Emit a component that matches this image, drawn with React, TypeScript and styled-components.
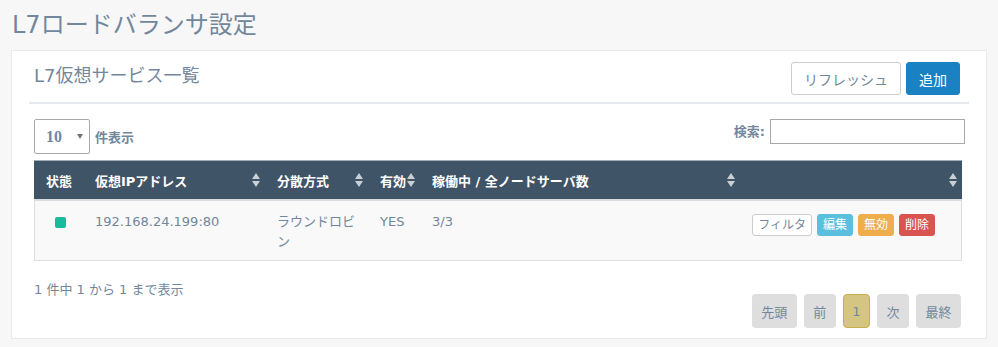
import React from "react";
import styled, { createGlobalStyle } from "styled-components";

const GlobalStyle = createGlobalStyle`
  html, body {
    margin: 0;
    padding: 0;
    background: #F7F7F7;
  }
  body {
    font-family: "DejaVu Sans", "Noto Sans CJK JP", sans-serif;
    font-size: 13px;
    color: #73879C;
  }
  * { box-sizing: border-box; }
`;

const Page = styled.div`
  width: 998px;
  height: 347px;
  padding: 0 11px;
  overflow: hidden;
`;

const PageTitle = styled.h3`
  margin: 0;
  height: 50px;
  line-height: 50px;
  font-size: 24px;
  font-weight: normal;
  padding-left: 1px;
  color: #73879C;
`;

const Panel = styled.div`
  background: #fff;
  border: 1px solid #E6E9ED;
  padding: 10px 17px;
  height: 289px;
`;

const PanelHeader = styled.div`
  display: flex;
  justify-content: space-between;
  align-items: flex-start;
  height: 43px;
  border-bottom: 2px solid #E6E9ED;
  padding: 0 9px 0 5px;
`;

const PanelTitle = styled.h2`
  margin: 0;
  font-size: 18px;
  line-height: 29px;
  font-weight: normal;
  color: #73879C;
`;

const ButtonGroup = styled.div`
  display: flex;
  gap: 5px;
  margin-top: 1px;
`;

const HeaderButton = styled.button<{ $primary?: boolean }>`
  height: 33px;
  padding: 0 12px;
  font-family: inherit;
  font-size: 14px;
  border-radius: 3px;
  border: 1px solid ${(p) => (p.$primary ? "#1A82C3" : "#cccccc")};
  background: ${(p) => (p.$primary ? "#1A82C3" : "#ffffff")};
  color: ${(p) => (p.$primary ? "#ffffff" : "#73879C")};
`;

const Content = styled.div`
  padding: 0 4px 0 5px;
`;

const Controls = styled.div`
  display: flex;
  justify-content: space-between;
  align-items: flex-start;
  margin-top: 15px;
  height: 35px;
`;

const LengthGroup = styled.div`
  display: flex;
  align-items: center;
  gap: 5px;
  font-weight: bold;
`;

const SelectBox = styled.div`
  width: 56px;
  height: 35px;
  border: 1px solid #aaaaaa;
  border-radius: 2px;
  display: flex;
  align-items: center;
  justify-content: space-between;
  padding: 0 6px 0 11px;
  font-family: "Liberation Serif", serif;
  font-size: 16px;
  font-weight: bold;
  color: #73879C;
`;

const Caret = styled.span`
  width: 0;
  height: 0;
  border-left: 3px solid transparent;
  border-right: 3px solid transparent;
  border-top: 5px solid #777;
`;

const SearchGroup = styled.label`
  display: flex;
  align-items: flex-start;
  gap: 5px;
  font-weight: bold;
  line-height: 25px;
`;

const SearchInput = styled.input`
  width: 195px;
  height: 25px;
  border: 1px solid #aaaaaa;
  padding: 0 4px;
  font-family: inherit;
  outline: none;
`;

const TableWrap = styled.div`
  margin-top: 6px;
  margin-right: 3px;
`;

const Table = styled.table`
  width: 928px;
  border-collapse: separate;
  border-spacing: 0;
  table-layout: fixed;
`;

const Th = styled.th`
  height: 41px;
  background: #3F5467;
  color: #ffffff;
  font-weight: bold;
  text-align: left;
  padding: 0 5px 0 12px;
  border-top: 1px solid #a3acb5;
  border-bottom: 2px solid #d9dde1;
`;

const ThInner = styled.div`
  display: flex;
  justify-content: space-between;
  align-items: center;
  white-space: nowrap;
`;

const Td = styled.td<{ $first?: boolean; $last?: boolean }>`
  background: #F9F9F9;
  vertical-align: top;
  padding: 11px 8px 0 12px;
  line-height: 20px;
  height: 60px;
  border-bottom: 1px solid #dddddd;
  border-left: ${(p) => (p.$first ? "1px solid #dddddd" : "none")};
  border-right: ${(p) => (p.$last ? "1px solid #dddddd" : "none")};
`;

const ActionTd = styled(Td)`
  padding: 13px 26px 0 0;
`;

const StatusDot = styled.span<{ $color: string }>`
  display: block;
  width: 11px;
  height: 11px;
  border-radius: 2px;
  background: ${(p) => p.$color};
  margin: 5px 0 0 8px;
`;

const Actions = styled.div`
  display: flex;
  justify-content: flex-end;
  gap: 5px;
`;

const SmallButton = styled.button<{ $bg: string; $border: string; $fg: string }>`
  height: 22px;
  padding: 0 5px;
  font-family: inherit;
  font-size: 12px;
  line-height: 20px;
  border-radius: 3px;
  background: ${(p) => p.$bg};
  border: 1px solid ${(p) => p.$border};
  color: ${(p) => p.$fg};
`;

const Footer = styled.div`
  display: flex;
  justify-content: space-between;
  align-items: flex-start;
  padding-top: 19px;
  margin-right: 4px;
`;

const Info = styled.div`
  line-height: 20px;
`;

const Pagination = styled.div`
  display: flex;
  gap: 7px;
  margin-top: 14px;
`;

const PageButton = styled.button<{ $active?: boolean }>`
  height: 34px;
  padding: 0 ${(p) => (p.$active ? "8.5px" : "9.5px")};
  font-family: inherit;
  font-size: 13px;
  border-radius: 4px;
  border: ${(p) => (p.$active ? "1px solid #C7AE4F" : "none")};
  background: ${(p) => (p.$active ? "#D5C582" : "#DEDEDE")};
  color: #73879C;
`;

const SortIcon = () => (
  <svg width="8" height="14" viewBox="0 0 8 14" style={{ flex: "none" }}>
    <path d="M4 0 L8 6 L0 6 Z" fill="#c9cfd5" />
    <path d="M0 8 L8 8 L4 14 Z" fill="#c9cfd5" />
  </svg>
);

const columns: { label: string; width: number; sort: boolean }[] = [
  { label: "状態", width: 49, sort: false },
  { label: "仮想IPアドレス", width: 182, sort: true },
  { label: "分散方式", width: 103, sort: true },
  { label: "有効", width: 52, sort: true },
  { label: "稼働中 / 全ノードサーバ数", width: 320, sort: true },
  { label: "", width: 222, sort: true },
];

export default function App() {
  return (
    <>
      <GlobalStyle />
      <Page>
        <PageTitle>L7ロードバランサ設定</PageTitle>
        <Panel>
          <PanelHeader>
            <PanelTitle>L7仮想サービス一覧</PanelTitle>
            <ButtonGroup>
              <HeaderButton>リフレッシュ</HeaderButton>
              <HeaderButton $primary>追加</HeaderButton>
            </ButtonGroup>
          </PanelHeader>
          <Content>
            <Controls>
              <LengthGroup>
                <SelectBox>
                  10
                  <Caret />
                </SelectBox>
                件表示
              </LengthGroup>
              <SearchGroup>
                検索:
                <SearchInput type="text" />
              </SearchGroup>
            </Controls>
            <TableWrap>
              <Table>
                <colgroup>
                  {columns.map((c, i) => (
                    <col key={i} style={{ width: c.width }} />
                  ))}
                </colgroup>
                <thead>
                  <tr>
                    {columns.map((c, i) => (
                      <Th key={i}>
                        <ThInner>
                          <span>{c.label}</span>
                          {c.sort && <SortIcon />}
                        </ThInner>
                      </Th>
                    ))}
                  </tr>
                </thead>
                <tbody>
                  <tr>
                    <Td $first>
                      <StatusDot $color="#1ABB9C" />
                    </Td>
                    <Td>192.168.24.199:80</Td>
                    <Td>ラウンドロビン</Td>
                    <Td>YES</Td>
                    <Td>3/3</Td>
                    <ActionTd $last>
                      <Actions>
                        <SmallButton $bg="#ffffff" $border="#cccccc" $fg="#73879C">フィルタ</SmallButton>
                        <SmallButton $bg="#5BC0DE" $border="#5BC0DE" $fg="#ffffff">編集</SmallButton>
                        <SmallButton $bg="#F0AD4E" $border="#F0AD4E" $fg="#ffffff">無効</SmallButton>
                        <SmallButton $bg="#D9534F" $border="#D9534F" $fg="#ffffff">削除</SmallButton>
                      </Actions>
                    </ActionTd>
                  </tr>
                </tbody>
              </Table>
            </TableWrap>
            <Footer>
              <Info>1 件中 1 から 1 まで表示</Info>
              <Pagination>
                <PageButton>先頭</PageButton>
                <PageButton>前</PageButton>
                <PageButton $active>1</PageButton>
                <PageButton>次</PageButton>
                <PageButton>最終</PageButton>
              </Pagination>
            </Footer>
          </Content>
        </Panel>
      </Page>
    </>
  );
}
